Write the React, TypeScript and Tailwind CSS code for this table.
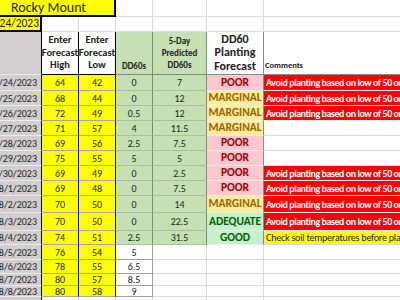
import type { ReactNode } from 'react';

type Fila = {
  fecha: string;
  alta: number;
  baja: number;
  dd: string;
  cinco: string;
  pronostico: '' | 'POOR' | 'MARGINAL' | 'ADEQUATE' | 'GOOD';
  comentario: '' | 'rojo' | 'amarillo';
  alto: string;
};

const COLS = 'grid grid-cols-[59px_37px_37px_37px_54px_57px_220px] -ml-[17px]';

const filas: Fila[] = [
  { fecha: '7/24/2023', alta: 64, baja: 42, dd: '0', cinco: '7', pronostico: 'POOR', comentario: 'rojo', alto: 'h-[16px]' },
  { fecha: '7/25/2023', alta: 68, baja: 44, dd: '0', cinco: '12', pronostico: 'MARGINAL', comentario: 'rojo', alto: 'h-[15px]' },
  { fecha: '7/26/2023', alta: 72, baja: 49, dd: '0.5', cinco: '12', pronostico: 'MARGINAL', comentario: 'rojo', alto: 'h-[15px]' },
  { fecha: '7/27/2023', alta: 71, baja: 57, dd: '4', cinco: '11.5', pronostico: 'MARGINAL', comentario: '', alto: 'h-[15px]' },
  { fecha: '7/28/2023', alta: 69, baja: 56, dd: '2.5', cinco: '7.5', pronostico: 'POOR', comentario: '', alto: 'h-[15px]' },
  { fecha: '7/29/2023', alta: 75, baja: 55, dd: '5', cinco: '5', pronostico: 'POOR', comentario: '', alto: 'h-[15px]' },
  { fecha: '7/30/2023', alta: 69, baja: 49, dd: '0', cinco: '2.5', pronostico: 'POOR', comentario: 'rojo', alto: 'h-[15px]' },
  { fecha: '8/1/2023', alta: 69, baja: 48, dd: '0', cinco: '7.5', pronostico: 'POOR', comentario: 'rojo', alto: 'h-[15px]' },
  { fecha: '8/2/2023', alta: 70, baja: 50, dd: '0', cinco: '14', pronostico: 'MARGINAL', comentario: 'rojo', alto: 'h-[17px]' },
  { fecha: '8/3/2023', alta: 70, baja: 50, dd: '0', cinco: '22.5', pronostico: 'ADEQUATE', comentario: 'rojo', alto: 'h-[18px]' },
  { fecha: '8/4/2023', alta: 74, baja: 51, dd: '2.5', cinco: '31.5', pronostico: 'GOOD', comentario: 'amarillo', alto: 'h-[14px]' },
  { fecha: '8/5/2023', alta: 76, baja: 54, dd: '5', cinco: '', pronostico: '', comentario: '', alto: 'h-[15px]' },
  { fecha: '8/6/2023', alta: 78, baja: 55, dd: '6.5', cinco: '', pronostico: '', comentario: '', alto: 'h-[14px]' },
  { fecha: '8/7/2023', alta: 80, baja: 57, dd: '8.5', cinco: '', pronostico: '', comentario: '', alto: 'h-[12px]' },
  { fecha: '8/8/2023', alta: 80, baja: 58, dd: '9', cinco: '', pronostico: '', comentario: '', alto: 'h-[11px]' },
];

const estilosPronostico = {
  '': 'bg-white',
  POOR: 'bg-[#ffc7ce] text-[#9c0006]',
  MARGINAL: 'bg-[#ffeb9c] text-[#9c6500]',
  ADEQUATE: 'bg-[#c6efce] text-[#006100]',
  GOOD: 'bg-[#c6efce] text-[#006100]',
};

function Celda({ className = '', children }: { className?: string; children?: ReactNode }) {
  return (
    <div className={`flex items-center overflow-hidden whitespace-nowrap border-r border-b ${className}`}>
      {children}
    </div>
  );
}

export default function App() {
  return (
    <div className="h-[300px] w-[400px] overflow-hidden bg-white font-['Carlito','Liberation_Sans_Narrow',Lato,sans-serif] text-[10px] text-[#222]">
      {/* fila titulo */}
      <div className={`${COLS} h-[17px]`}>
        <div className="col-span-3 flex items-center justify-center border-r-2 border-b-2 border-black bg-[#ffff00] text-[14px] leading-none">
          Rocky Mount
        </div>
        <Celda className="border-[#dadada]" />
        <Celda className="border-[#dadada]" />
        <Celda className="border-[#dadada]" />
        <Celda className="border-[#dadada]" />
      </div>

      {/* fila fecha */}
      <div className={`${COLS} h-[15px]`}>
        <div className="flex items-center justify-end overflow-hidden border-r-2 border-b-2 border-black bg-[#ffff00] pr-[1px] text-[11.5px] leading-none">
          7/24/2023
        </div>
        <Celda className="border-[#dadada]" />
        <Celda className="border-[#dadada]" />
        <Celda className="border-[#dadada]" />
        <Celda className="border-[#dadada]" />
        <Celda className="border-[#dadada]" />
        <Celda className="border-[#dadada]" />
      </div>

      {/* encabezados */}
      <div className={`${COLS} h-[43px] font-bold`}>
        <Celda className="border-r-black border-b-[#e8e8e8] bg-[#d0cece]" />
        <Celda className="justify-center border-black text-center text-[10.5px] leading-[12.5px]">
          <span>Enter<br />Forecast<br />High</span>
        </Celda>
        <Celda className="justify-center border-black text-center text-[10.5px] leading-[12.5px]">
          <span>Enter<br />Forecast<br />Low</span>
        </Celda>
        <Celda className="items-end justify-center border-[#7e8c7a] bg-[#c6e0b4] pb-[2px] text-[9px]">
          DD60s
        </Celda>
        <Celda className="justify-center border-[#7e8c7a] bg-[#c6e0b4] text-center text-[9px] font-semibold leading-[12px]">
          <span>5-Day<br />Predicted<br />DD60s</span>
        </Celda>
        <Celda className="justify-center border-[#8a8a8a] text-center text-[12px] leading-[13.5px]">
          <span>DD60<br />Planting<br />Forecast</span>
        </Celda>
        <Celda className="items-end border-[#8a8a8a] pb-[2px] pl-[1px] text-[8.5px]">Comments</Celda>
      </div>

      {filas.map((fila) => (
        <div key={fila.fecha} className={`${COLS} ${fila.alto}`}>
          <Celda className="justify-end border-r-black border-b-[#ececec] bg-[#d0cece] pr-[4px]">
            {fila.fecha}
          </Celda>
          <Celda className="justify-center border-r-black border-b-[#a8a8a8] bg-[#ffff00]">{fila.alta}</Celda>
          <Celda className="justify-center border-r-black border-b-[#a8a8a8] bg-[#ffff00]">{fila.baja}</Celda>
          <Celda
            className={`justify-center ${
              fila.cinco ? 'border-r-[#7e8c7a] border-b-[#a9bf9c] bg-[#c6e0b4]' : 'border-[#a0a0a0] bg-white'
            }`}
          >
            {fila.dd}
          </Celda>
          <Celda
            className={`justify-center ${
              fila.cinco ? 'border-r-[#7e8c7a] border-b-[#a9bf9c] bg-[#c6e0b4]' : 'border-[#dadada] bg-white'
            }`}
          >
            {fila.cinco}
          </Celda>
          <Celda
            className={`justify-center text-[11.5px] font-bold ${
              fila.pronostico ? 'border-r-[#8a8a8a] border-b-[#ececec]' : 'border-[#dadada]'
            } ${estilosPronostico[fila.pronostico]}`}
          >
            {fila.pronostico}
          </Celda>
          {fila.comentario === 'rojo' ? (
            <Celda className="border-b-[#f0f0f0] bg-[#ff0000] pl-[2px] text-[10px] font-bold tracking-[-0.45px] text-white">
              Avoid planting based on low of 50 or less
            </Celda>
          ) : fila.comentario === 'amarillo' ? (
            <Celda className="border-b-[#dadada] bg-[#ffff00] pl-[2px] text-[10px] tracking-[-0.2px] text-[#222]">
              Check soil temperatures before planting
            </Celda>
          ) : (
            <Celda className="border-[#dadada]" />
          )}
        </div>
      ))}

      <div className={`${COLS} h-[10px]`}>
        <Celda className="border-r-black border-b-[#ececec] bg-[#d0cece]" />
        <Celda className="border-[#dadada]" />
        <Celda className="border-[#dadada]" />
        <Celda className="border-[#dadada]" />
        <Celda className="border-[#dadada]" />
        <Celda className="border-[#dadada]" />
        <Celda className="border-[#dadada]" />
      </div>
    </div>
  );
}
